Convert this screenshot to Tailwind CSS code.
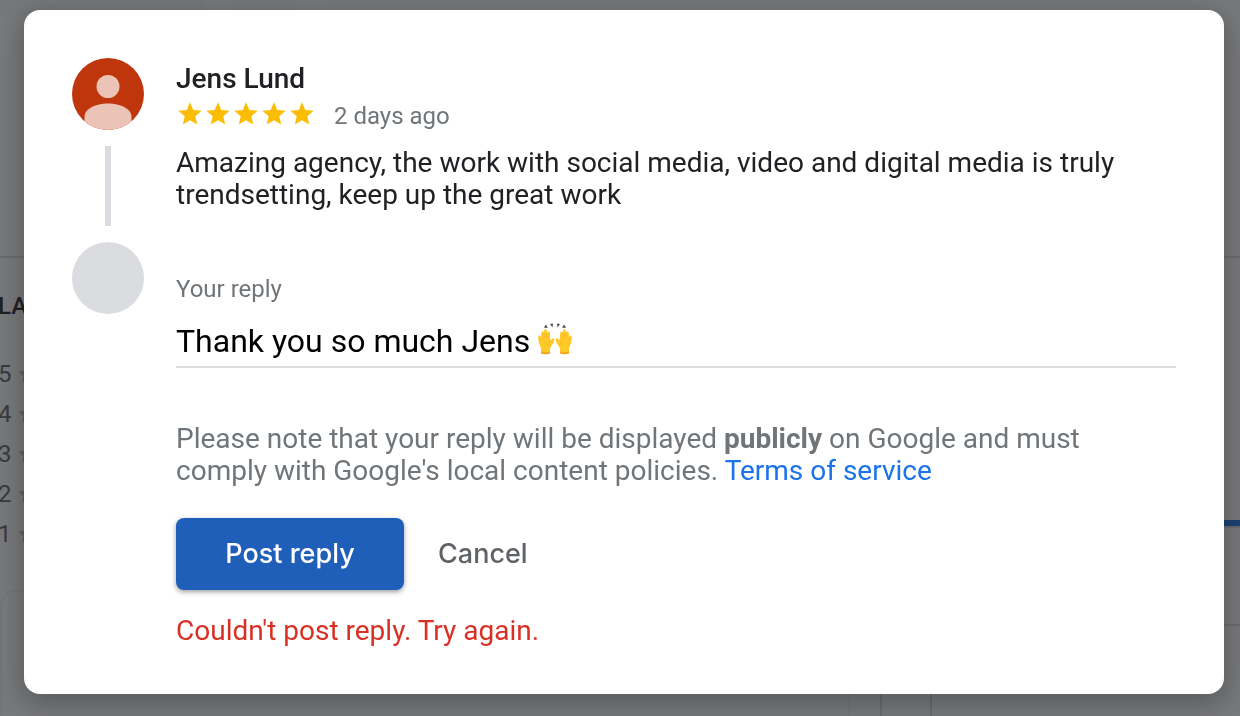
<!DOCTYPE html>
<html lang="en">
<head>
  <meta charset="UTF-8" />
  <meta name="viewport" content="width=device-width, initial-scale=1.0" />
  <title>Reply to review</title>
  <script src="https://cdn.jsdelivr.net/npm/@tailwindcss/browser@4"></script>
</head>
<body class="h-screen overflow-hidden bg-white font-['Roboto',sans-serif] text-[#202124]">

<svg class="hidden">
  <symbol id="star" viewBox="0 0 24 24"><path d="M12 17.27 18.18 21l-1.64-7.03L22 9.24l-7.19-.61L12 2 9.19 8.63 2 9.24l5.46 4.73L5.82 21z" /></symbol>
</svg>

<!-- Reviews page -->
<main class="flex h-screen flex-col overflow-hidden" aria-hidden="true">
  <div class="h-[258px] shrink-0 border-b-2 border-[#dadce0]">
    <div class="flex h-4 gap-[26px]">
      <div class="w-[205px] bg-[#f8f9fa]"></div>
      <div class="w-[66px] bg-[#f8f9fa]"></div>
      <div class="flex-1 bg-[#fcfcfd]"></div>
    </div>
  </div>
  <div class="flex h-[332px] shrink-0 justify-between">
    <div class="-ml-0.5 pt-8">
      <h2 class="text-2xl font-medium">LABELS</h2>
      <ul class="mt-8 text-2xl leading-10 text-[#5f6368]">
        <li class="flex items-center gap-1">5 <svg class="size-6 fill-[#bdc1c6]"><use href="#star" /></svg></li>
        <li class="flex items-center gap-1">4 <svg class="size-6 fill-[#bdc1c6]"><use href="#star" /></svg></li>
        <li class="flex items-center gap-1">3 <svg class="size-6 fill-[#bdc1c6]"><use href="#star" /></svg></li>
        <li class="flex items-center gap-1">2 <svg class="size-6 fill-[#bdc1c6]"><use href="#star" /></svg></li>
        <li class="flex items-center gap-1">1 <svg class="size-6 fill-[#bdc1c6]"><use href="#star" /></svg></li>
      </ul>
    </div>
    <div class="w-40 pt-[262px]">
      <div class="h-2 border-b-2 border-[#dadce0] bg-[#1a73e8]"></div>
    </div>
  </div>
  <div class="flex flex-1">
    <div class="w-[850px] rounded-t-2xl border-2 border-b-0 border-[#f1f3f4]"></div>
    <div class="ml-[30px] w-[52px] border-x-2 border-[#dadce0]"></div>
    <div class="flex-1 pt-[34px]"><div class="border-b-2 border-[#dadce0]"></div></div>
  </div>
</main>

<!-- Reply dialog -->
<div class="fixed inset-0 flex bg-[#202124]/60 pt-2.5 pr-4 pb-[22px] pl-6">
  <div role="dialog" aria-label="Reply to review" class="flex flex-1 gap-8 rounded-2xl bg-white p-12 shadow-[0_8px_28px_4px_rgba(0,0,0,0.25)]">
    <div class="flex w-[72px] shrink-0 flex-col items-center gap-4">
      <svg class="size-[72px] rounded-full" viewBox="0 0 72 72">
        <rect width="72" height="72" fill="#bf360c" />
        <circle cx="36" cy="28.5" r="11.5" fill="#ecc3b7" />
        <path d="M12.500 72V59C12.500 50.500 24 45.500 36 45.500S59.500 50.500 59.500 59V72z" fill="#ecc3b7" />
      </svg>
      <div class="h-20 w-1.5 bg-[#dadce0]"></div>
      <div class="size-[72px] rounded-full bg-[#dadce0]"></div>
    </div>

    <div class="flex-1">
      <h1 class="pt-[5px] text-[28px] leading-8 font-medium">Jens Lund</h1>
      <div class="flex h-[42px] items-center gap-[18px]">
        <div class="mb-1 flex" role="img" aria-label="5 stars">
          <svg class="size-7 fill-[#fbbc04]"><use href="#star" /></svg>
          <svg class="size-7 fill-[#fbbc04]"><use href="#star" /></svg>
          <svg class="size-7 fill-[#fbbc04]"><use href="#star" /></svg>
          <svg class="size-7 fill-[#fbbc04]"><use href="#star" /></svg>
          <svg class="size-7 fill-[#fbbc04]"><use href="#star" /></svg>
        </div>
        <span class="text-2xl text-[#70757a]">2 days ago</span>
      </div>
      <p class="mt-2.5 text-[28px] leading-8">Amazing agency, the work with social media, video and digital media is truly trendsetting, keep up the great work</p>

      <label for="reply" class="mt-[62px] block text-2xl text-[#70757a]">Your reply</label>
      <div class="mt-4 flex h-[47px] gap-2 border-b-2 border-[#dadce0]">
        <input id="reply" type="text" value="Thank you so much Jens" class="field-sizing-content h-10 text-[32px] text-black outline-none">
        <svg class="mt-0.5 h-8 w-[34px]" viewBox="0 0 34 32" role="img" aria-label="Raising hands">
          <g id="hand">
            <path d="M3 30.500V25C1.500 22 .2 19 .2 14.500Q.2 12.500 1.600 12.500 2.800 12.500 3 14.500L3.200 10Q3.400 8.300 4.700 8.300 6 8.300 6.100 10V8Q6.300 6.300 7.600 6.300 9 6.300 9.100 8V10Q9.300 8.500 10.500 8.500 11.800 8.500 11.900 10.200L12.300 17.500 14 15.700Q15.800 14.700 16.500 16.500 16 20 13.500 22.800L12 25.500V30.500Q7.500 32 3 30.500z" fill="#ffca28" />
            <path d="M6.100 10V15M9.100 10V15M3 15V17M9.800 22.500Q10.200 20 12.200 17.500" fill="none" stroke="#f0ac28" stroke-width="0.700" />
            <path d="M3 28.500Q7.500 30 12 28.500V30.500Q7.500 32 3 30.500z" fill="#efa623" />
            <path d="M5.800 4.500 8 1.500 9.800 5z M12 1 15 .5 14.500 4.500z" fill="#4e4e50" />
          </g>
          <use href="#hand" transform="translate(34 0) scale(-1 1)" />
        </svg>
      </div>

      <p class="mt-[55px] text-[28px] leading-8 text-[#70757a]">Please note that your reply will be displayed <b>publicly</b> on Google and must comply with Google's local content policies. <a href="#" class="text-[#1a73e8]">Terms of service</a></p>

      <div class="mt-[31px] flex gap-2.5 font-['Inter',sans-serif] text-[27px] font-medium">
        <button type="button" class="h-[72px] w-[228px] rounded-lg bg-[#1f5fba] text-white shadow-[0_2px_5px_rgba(60,64,67,0.5)]">Post reply</button>
        <button type="button" class="h-[72px] px-6 text-[#5f6368]">Cancel</button>
      </div>
      <p role="alert" class="mt-[25px] text-[28px] leading-8 text-[#d93025]">Couldn't post reply. Try again.</p>
    </div>
  </div>
</div>

</body>
</html>
